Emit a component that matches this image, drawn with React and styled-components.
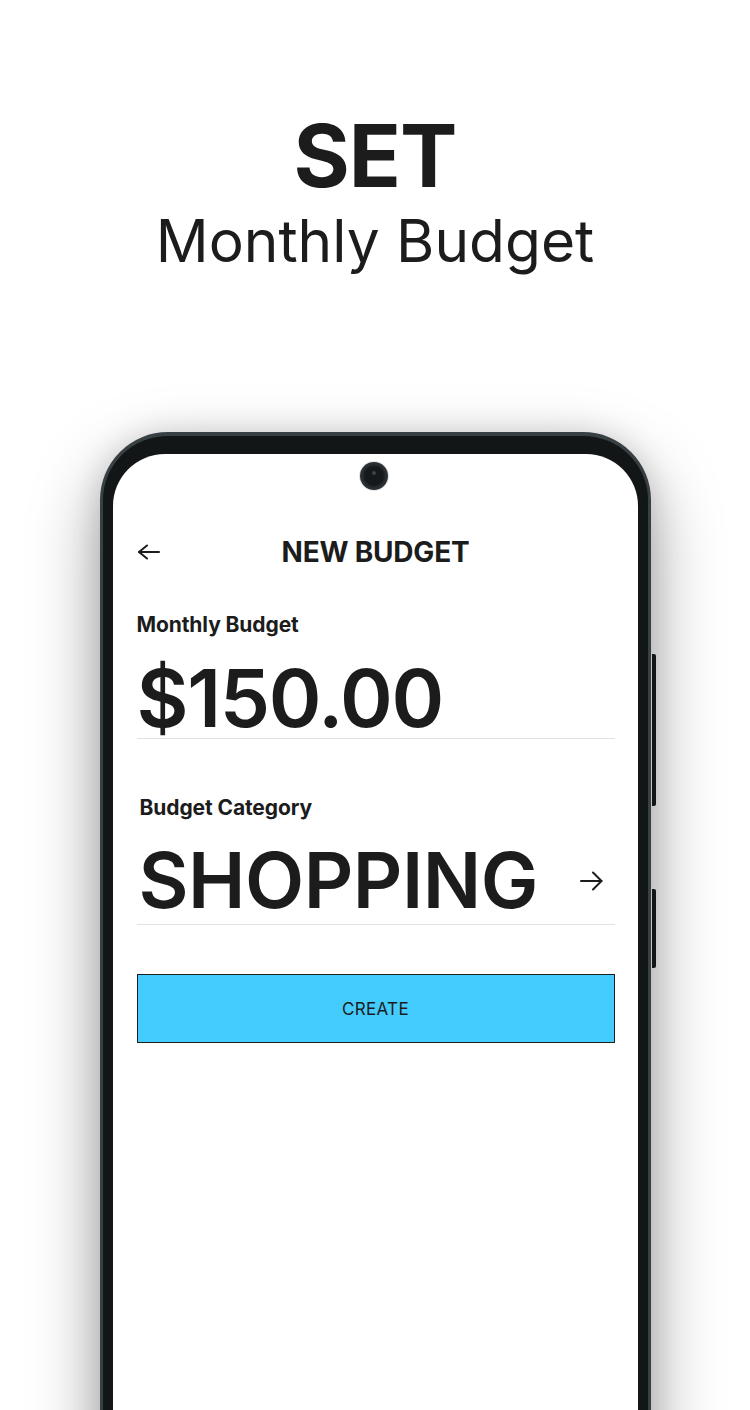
import React from 'react'
import styled, { createGlobalStyle } from 'styled-components'

const GlobalStyle = createGlobalStyle`
  html, body {
    margin: 0;
    padding: 0;
    background: #ffffff;
    overflow: hidden;
  }
  body {
    font-family: Inter, "Noto Sans", sans-serif;
    color: #1c1c1c;
  }
`

const Page = styled.div`
  width: 750px;
  height: 1410px;
  display: flex;
  flex-direction: column;
  align-items: center;
  overflow: hidden;
`

const Heading = styled.header`
  display: flex;
  flex-direction: column;
  align-items: center;
  padding-top: 108px;
`

const HeadingBig = styled.h1`
  margin: 0;
  font-size: 86px;
  font-weight: 700;
  line-height: 96px;
  letter-spacing: -1px;
  color: #1c1c1c;
`

const HeadingSub = styled.h2`
  margin: 0;
  font-size: 58.6px;
  font-weight: 400;
  line-height: 74px;
  color: #1c1c1c;
`

const Phone = styled.div`
  position: relative;
  flex-shrink: 0;
  margin-top: 154px;
  width: 551px;
  height: 1060px;
  box-sizing: border-box;
  padding: 18px 10px 0 10px;
  background: #121617;
  border: 3px solid #384044;
  border-top-width: 4px;
  border-radius: 68px 68px 0 0;
  box-shadow: 0 30px 70px rgba(0, 0, 0, 0.38), 0 0 30px rgba(0, 0, 0, 0.12);
`

const SideButton = styled.div`
  position: absolute;
  right: -8px;
  top: ${p => p.$top}px;
  width: 4px;
  height: ${p => p.$height}px;
  background: #121617;
  border-radius: 0 2px 2px 0;
`

const Screen = styled.div`
  position: relative;
  height: 100%;
  background: #ffffff;
  border-radius: 52px 52px 0 0;
  padding: 76px 23px 0 24px;
  box-sizing: border-box;
  display: flex;
  flex-direction: column;
`

const Camera = styled.div`
  position: absolute;
  top: 8px;
  left: 247px;
  width: 28px;
  height: 28px;
  border-radius: 50%;
  background: radial-gradient(circle at 50% 50%, #16191b 0, #16191b 9px, #2a2f33 12px, #2a2f33 14px);
  box-shadow: 0 0 0 1px rgba(0, 0, 0, 0.12);

  &::after {
    content: '';
    position: absolute;
    left: 12px;
    top: 9px;
    width: 4px;
    height: 4px;
    border-radius: 50%;
    background: #3d4347;
  }
`

const TopBar = styled.div`
  display: flex;
  align-items: center;
  height: 44px;
`

const IconButton = styled.button`
  display: flex;
  align-items: center;
  justify-content: center;
  width: 24px;
  height: 44px;
  padding: 0;
  border: none;
  background: none;
  color: #1c1c1c;
`

const TopTitle = styled.div`
  flex: 1;
  text-align: center;
  font-size: 28px;
  font-weight: 700;
  letter-spacing: -0.2px;
  padding-right: 24px;
  color: #1c1c1c;
`

const FieldLabel = styled.div`
  font-size: 21px;
  font-weight: 700;
  line-height: 24px;
  letter-spacing: -0.1px;
  margin-top: ${p => p.$mt}px;
  padding-left: ${p => p.$indent || 0}px;
  color: #1c1c1c;
`

const FieldRow = styled.div`
  display: flex;
  align-items: center;
  justify-content: space-between;
  margin-top: ${p => p.$mt}px;
  padding-bottom: ${p => p.$pb}px;
  border-bottom: 1px solid #e2e2e2;
`

const BigValue = styled.div`
  font-size: ${p => p.$size}px;
  font-weight: ${p => p.$weight};
  line-height: 1;
  letter-spacing: ${p => p.$spacing}px;
  padding-left: ${p => p.$indent || 0}px;
  color: #1c1c1c;
`

const RowArrow = styled.span`
  display: flex;
  margin-right: 12px;
  color: #1c1c1c;
`

const CreateButton = styled.button`
  margin-top: 49px;
  height: 69px;
  width: 100%;
  background: #43ccfd;
  border: 1.5px solid #1e1e1e;
  font-family: Inter, "Noto Sans", sans-serif;
  font-size: 17px;
  font-weight: 400;
  letter-spacing: 0.3px;
  color: #1c1c1c;
`

const BackArrow = () => (
  <svg width="24" height="16" viewBox="0 0 24 16" fill="none" stroke="currentColor" strokeWidth="2" strokeLinecap="round" strokeLinejoin="round">
    <path d="M2 8H22" />
    <path d="M10 1.5L2 8L10 14.5" />
  </svg>
)

const NextArrow = () => (
  <svg width="23" height="22" viewBox="0 0 23 22" fill="none" stroke="currentColor" strokeWidth="2" strokeLinecap="round" strokeLinejoin="round">
    <path d="M1 11H21.5" />
    <path d="M13 2.5L21.5 11L13 19.5" />
  </svg>
)

export default function App() {
  return (
    <Page>
      <GlobalStyle />
      <Heading>
        <HeadingBig>SET</HeadingBig>
        <HeadingSub>Monthly Budget</HeadingSub>
      </Heading>
      <Phone>
        <SideButton $top={218} $height={152} />
        <SideButton $top={453} $height={79} />
        <Screen>
          <Camera />
          <TopBar>
            <IconButton aria-label="Back">
              <BackArrow />
            </IconButton>
            <TopTitle>NEW BUDGET</TopTitle>
          </TopBar>

          <FieldLabel $mt={39}>Monthly Budget</FieldLabel>
          <FieldRow $mt={21} $pb={0}>
            <BigValue $size={80} $weight={600} $spacing={-1.3}>$150.00</BigValue>
          </FieldRow>

          <FieldLabel $mt={57} $indent={3}>Budget Category</FieldLabel>
          <FieldRow $mt={22} $pb={5}>
            <BigValue $size={77} $weight={600} $spacing={-0.5} $indent={2}>SHOPPING</BigValue>
            <RowArrow>
              <NextArrow />
            </RowArrow>
          </FieldRow>

          <CreateButton>CREATE</CreateButton>
        </Screen>
      </Phone>
    </Page>
  )
}
